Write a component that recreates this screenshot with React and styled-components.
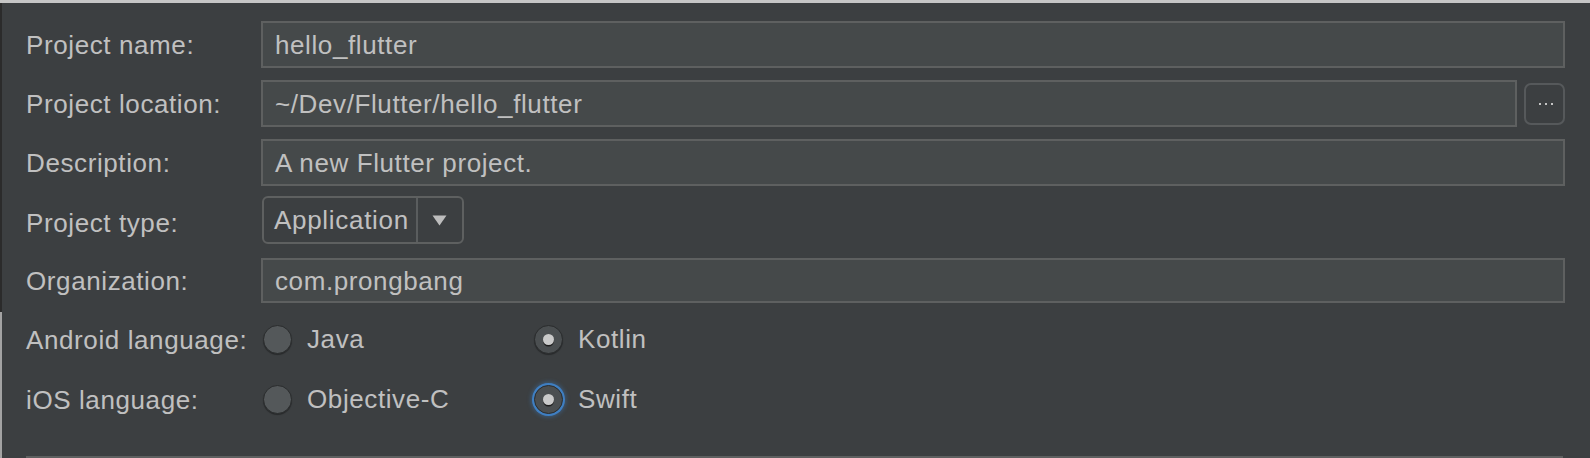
import React from "react";
import styled, { createGlobalStyle } from "styled-components";

const GlobalStyle = createGlobalStyle`
  html, body {
    margin: 0;
    padding: 0;
    background: #3c3f41;
  }
  * {
    box-sizing: border-box;
  }
`;

const Frame = styled.div`
  width: 1590px;
  height: 458px;
  overflow: hidden;
  border-top: 3px solid #c6c6c6;
  background:
    linear-gradient(#2b2b2b, #2b2b2b) left top / 2px 309px no-repeat,
    linear-gradient(#a3a3a3, #a3a3a3) left 309px / 2px 100% no-repeat,
    #3c3f41;
  padding: 18px 25px 0 26px;
  font-family: "Helvetica Neue", "Liberation Sans", Arial, sans-serif;
  font-size: 26px;
  letter-spacing: 0.6px;
  color: #c0c0c0;
`;

const Form = styled.div`
  display: grid;
  grid-template-columns: 235px 1fr;
  row-gap: 12px;
  align-items: center;
`;

const Label = styled.label`
  white-space: nowrap;
  line-height: 30px;
  padding-top: 1px;
`;

const FieldRow = styled.div`
  display: flex;
  align-items: center;
  gap: 7px;
`;

const TextField = styled.div`
  flex: 1;
  height: ${({ $h }) => $h || 47}px;
  display: flex;
  align-items: center;
  padding: 1px 12px 0;
  background: #45494a;
  border: 2px solid #5e6060;
  white-space: nowrap;
`;

const BrowseButton = styled.button`
  width: 41px;
  height: 42px;
  display: flex;
  align-items: center;
  justify-content: center;
  padding: 0 0 0 4px;
  background: #3c3f41;
  border: 2px solid #56595b;
  border-radius: 7px;
  color: #bbbbbb;
`;

const Combo = styled.div`
  justify-self: start;
  margin: -2px 0 2px 1px;
  height: 48px;
  display: flex;
  border: 2px solid #5e6060;
  border-radius: 6px;
  background: #3c3f41;
`;

const ComboValue = styled.div`
  display: flex;
  align-items: center;
  padding: 1px 7px 0 10px;
  border-right: 2px solid #5a5d5e;
  letter-spacing: 0.7px;
`;

const ComboArrow = styled.div`
  width: 44px;
  display: flex;
  align-items: center;
  justify-content: center;
`;

const RadioRow = styled.div`
  height: 48px;
  display: grid;
  grid-template-columns: 271px 1fr;
  align-items: center;
  padding-left: 2px;
`;

const RadioOption = styled.div`
  display: flex;
  align-items: center;
  gap: 15px;
`;

const RadioCircle = styled.span`
  width: 29px;
  height: 29px;
  border-radius: 50%;
  display: flex;
  align-items: center;
  justify-content: center;
  background: ${({ $checked }) => ($checked ? "#4b4f51" : "#54585a")};
  border: 1.5px solid #2a2c2d;
  box-shadow: ${({ $focused }) =>
    $focused
      ? "0 0 0 2px #3f7fc2, 0 0 4px 3px rgba(63, 127, 194, 0.45)"
      : "0 1px 1px rgba(0, 0, 0, 0.35)"};
`;

const RadioDot = styled.span`
  width: 11px;
  height: 11px;
  border-radius: 50%;
  background: #cacaca;
  box-shadow: 0 1.5px 0 #1f1f1f;
`;

const BottomPanel = styled.div`
  grid-column: 1 / -1;
  margin: 21px 2px 0 0;
  height: 40px;
  background: #45494a;
  border-top: 2px solid #5e6060;
  border-left: 2px solid #5e6060;
  border-right: 2px solid #5e6060;
`;

function Radio({ label, checked, focused }) {
  return (
    <RadioOption>
      <RadioCircle $checked={checked} $focused={focused}>
        {checked && <RadioDot />}
      </RadioCircle>
      <span>{label}</span>
    </RadioOption>
  );
}

export default function App() {
  return (
    <>
      <GlobalStyle />
      <Frame>
        <Form>
          <Label>Project name:</Label>
          <FieldRow>
            <TextField>hello_flutter</TextField>
          </FieldRow>

          <Label>Project location:</Label>
          <FieldRow>
            <TextField>~/Dev/Flutter/hello_flutter</TextField>
            <BrowseButton>
              <svg width="18" height="4" viewBox="0 0 18 4">
                <rect x="1" y="1" width="2" height="2" fill="#c4c4c4" />
                <rect x="7" y="1" width="2" height="2" fill="#c4c4c4" />
                <rect x="13" y="1" width="2" height="2" fill="#c4c4c4" />
              </svg>
            </BrowseButton>
          </FieldRow>

          <Label>Description:</Label>
          <FieldRow>
            <TextField>A new Flutter project.</TextField>
          </FieldRow>

          <Label>Project type:</Label>
          <Combo>
            <ComboValue>Application</ComboValue>
            <ComboArrow>
              <svg width="15" height="11" viewBox="0 0 15 11">
                <path d="M0.5 0.5 L14.5 0.5 L7.5 10.5 Z" fill="#bdbdbd" />
              </svg>
            </ComboArrow>
          </Combo>

          <Label>Organization:</Label>
          <FieldRow>
            <TextField $h={45}>com.prongbang</TextField>
          </FieldRow>

          <Label>Android language:</Label>
          <RadioRow>
            <Radio label="Java" />
            <Radio label="Kotlin" checked />
          </RadioRow>

          <Label>iOS language:</Label>
          <RadioRow>
            <Radio label="Objective-C" />
            <Radio label="Swift" checked focused />
          </RadioRow>

          <BottomPanel />
        </Form>
      </Frame>
    </>
  );
}
